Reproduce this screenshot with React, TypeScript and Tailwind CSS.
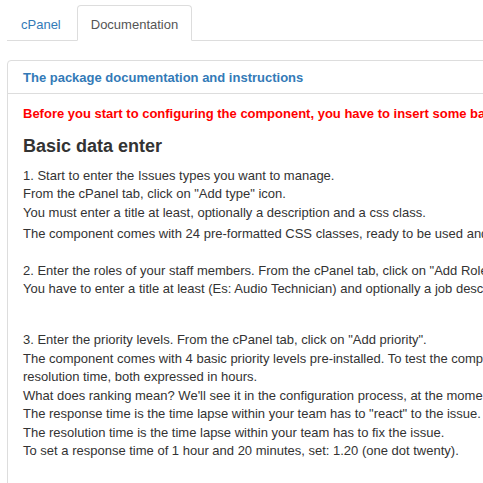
const lines1 = [
	"1. Start to enter the Issues types you want to manage.",
	'From the cPanel tab, click on "Add type" icon.',
	"You must enter a title at least, optionally a description and a css class.",
];

const lines2 = [
	'2. Enter the roles of your staff members. From the cPanel tab, click on "Add Role" icon.',
	"You have to enter a title at least (Es: Audio Technician) and optionally a job description.",
];

const lines3 = [
	'3. Enter the priority levels. From the cPanel tab, click on "Add priority".',
	"The component comes with 4 basic priority levels pre-installed. To test the component you can use them, with ranking, response time and",
	"resolution time, both expressed in hours.",
	"What does ranking mean? We'll see it in the configuration process, at the moment just enter a number.",
	'The response time is the time lapse within your team has to "react" to the issue.',
	"The resolution time is the time lapse within your team has to fix the issue.",
	"To set a response time of 1 hour and 20 minutes, set: 1.20 (one dot twenty).",
];

function Lines({ items }: { items: string[] }) {
	return (
		<div>
			{items.map((t) => (
				<div key={t} className="leading-[18.5px] whitespace-nowrap">
					{t}
				</div>
			))}
		</div>
	);
}

export default function App() {
	return (
		<div className="w-[483px] h-[483px] overflow-hidden bg-white font-['Liberation_Sans',Arial,sans-serif] text-[13px] text-[#333]">
			<div className="pl-[7px] pt-[5px] w-[1000px]">
				{/* Tabs */}
				<div className="flex border-b border-[#ddd] h-[36px]">
					<div className="h-[35px] px-[13px] pt-[11px] leading-[15px] text-[#337ab7] border border-transparent mr-[2px]">
						cPanel
					</div>
					<div className="h-[36px] px-[13px] pt-[11px] leading-[15px] text-[#555] bg-white border border-[#ddd] border-b-white rounded-t-[4px]">
						Documentation
					</div>
				</div>

				{/* Panel */}
				<div className="mt-[19px] border border-[#ddd] rounded-[4px]">
					<div className="h-[33px] px-[15px] pt-[8px] leading-[18px] border-b border-[#ddd] font-bold text-[#337ab7]">
						The package documentation and instructions
					</div>
					<div className="px-[15px] pt-[11px] pb-10">
						<div className="leading-[18.5px] font-bold text-[#ff0000] whitespace-nowrap">
							Before you start to configuring the component, you have to insert some basic data.
						</div>
						<div className="mt-[11px] text-[18px] leading-[22px] font-bold">Basic data enter</div>
						<div className="mt-[10px]">
							<Lines items={lines1} />
							<div className="mt-[2.5px]">
								<Lines items={["The component comes with 24 pre-formatted CSS classes, ready to be used and customized."]} />
							</div>
							<div className="mt-[18.5px]">
								<Lines items={lines2} />
							</div>
							<div className="mt-[32.5px]">
								<Lines items={lines3} />
							</div>
						</div>
					</div>
				</div>
			</div>
		</div>
	);
}
